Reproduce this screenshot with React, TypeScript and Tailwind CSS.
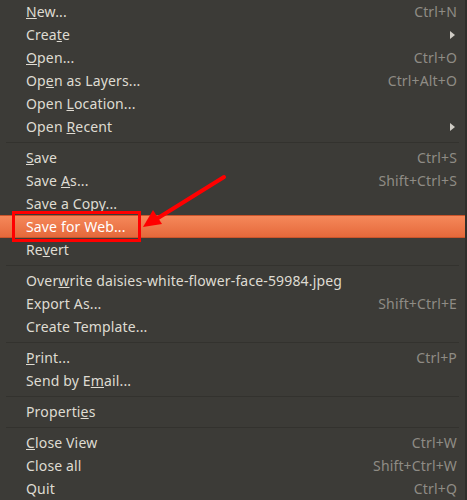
import React from "react";

type Item =
  | { sep: true }
  | {
      sep?: false;
      label: string;
      // index of the mnemonic letter
      u?: number;
      shortcut?: string;
      sub?: boolean;
      active?: boolean;
    };

const items: Item[] = [
  { label: "New...", u: 0, shortcut: "Ctrl+N" },
  { label: "Create", u: 4, sub: true },
  { label: "Open...", u: 0, shortcut: "Ctrl+O" },
  { label: "Open as Layers...", u: 2, shortcut: "Ctrl+Alt+O" },
  { label: "Open Location...", u: 5 },
  { label: "Open Recent", u: 5, sub: true },
  { sep: true },
  { label: "Save", u: 0, shortcut: "Ctrl+S" },
  { label: "Save As...", u: 5, shortcut: "Shift+Ctrl+S" },
  { label: "Save a Copy..." },
  { label: "Save for Web...", active: true },
  { label: "Revert", u: 2 },
  { sep: true },
  { label: "Overwrite daisies-white-flower-face-59984.jpeg", u: 4 },
  { label: "Export As...", shortcut: "Shift+Ctrl+E" },
  { label: "Create Template..." },
  { sep: true },
  { label: "Print...", u: 0, shortcut: "Ctrl+P" },
  { label: "Send by Email...", u: 9 },
  { sep: true },
  { label: "Properties", u: 8 },
  { sep: true },
  { label: "Close View", u: 0, shortcut: "Ctrl+W" },
  { label: "Close all", shortcut: "Shift+Ctrl+W" },
  { label: "Quit", shortcut: "Ctrl+Q" },
];

const Label = ({ text, u }: { text: string; u?: number }) => {
  if (u === undefined) return <span>{text}</span>;
  return (
    <span>
      {text.slice(0, u)}
      <span className="underline underline-offset-[1px] decoration-1">{text[u]}</span>
      {text.slice(u + 1)}
    </span>
  );
};

const App: React.FC = () => {
  return (
    <div
      className="relative w-[467px] h-[500px] overflow-hidden bg-[#3c3b37] border-r-2 border-[#2f2e2b] text-[14px] tracking-[0.15px] text-[#dfdbd2]"
      style={{ fontFamily: '"Noto Sans", "Open Sans", sans-serif' }}
    >
      {items.map((item, i) =>
        item.sep ? (
          <div key={i} className="h-[8px] flex items-center px-[6px]">
            <div className="w-full h-px bg-[#33322e]" />
          </div>
        ) : (
          <div
            key={i}
            className={
              item.active
                ? "h-[23px] flex items-center justify-between pl-[26px] pr-[8px] text-white bg-gradient-to-b from-[#f5885a] to-[#e5693b] border-y border-[#c9552c]"
                : "h-[23px] flex items-center justify-between pl-[26px] pr-[8px]"
            }
          >
            <Label text={item.label} u={item.u} />
            {item.shortcut && <span className="text-[#8f8c85]">{item.shortcut}</span>}
            {item.sub && (
              <svg width="6" height="8" viewBox="0 0 6 8" className="mr-[1px]">
                <path d="M0 0 L5 4 L0 8 Z" fill="#cfccc5" />
              </svg>
            )}
          </div>
        )
      )}

      {/* annotation: red box + arrow */}
      <div className="absolute left-[12px] top-[211px] w-[129px] h-[31px] border-[3px] border-[#ff0000]" />
      <svg className="absolute left-0 top-0" width="467" height="500" viewBox="0 0 467 500">
        <line x1="224" y1="177" x2="158" y2="218" stroke="#ff0000" strokeWidth="4" strokeLinecap="round" />
        <polygon points="143,227 153,210 162,224" fill="#ff0000" />
      </svg>
    </div>
  );
};

export default App;
